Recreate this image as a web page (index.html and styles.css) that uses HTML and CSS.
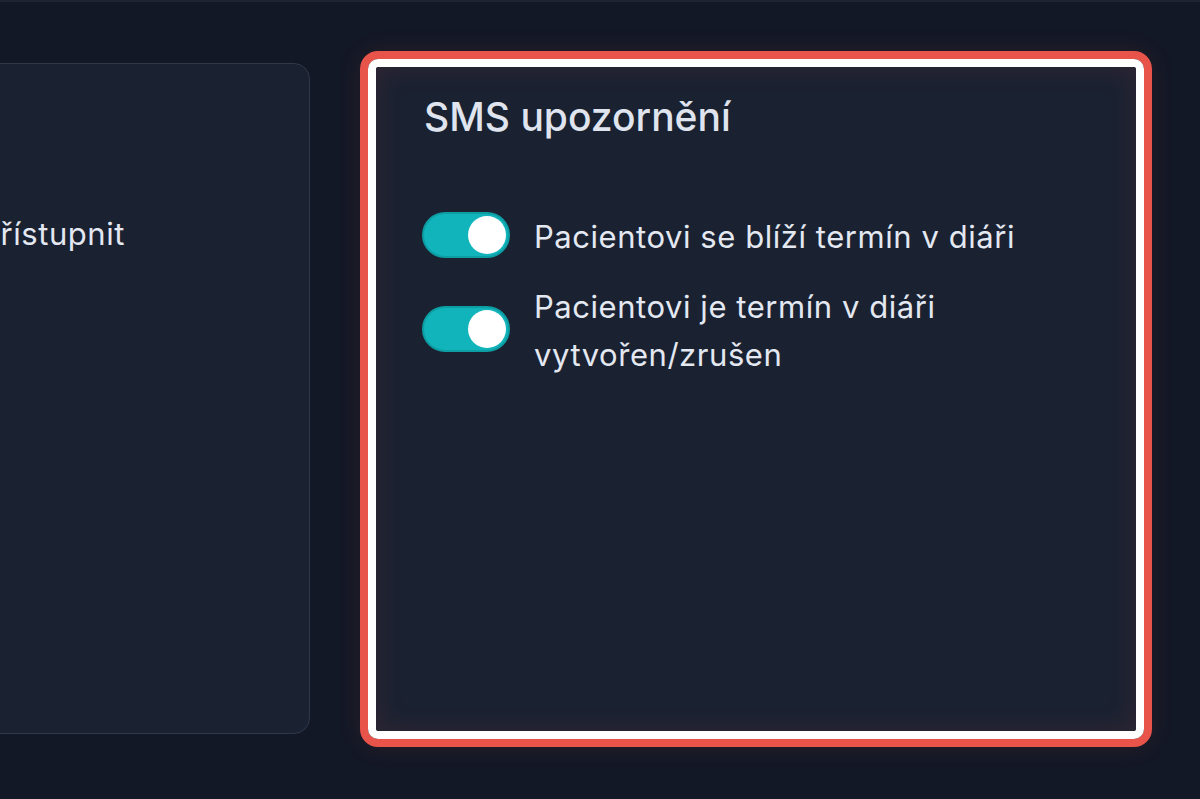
FILE: index.html
```html
<!DOCTYPE html>
<html lang="cs">
<head>
<meta charset="utf-8">
<title>SMS upozornění</title>
<link rel="stylesheet" href="styles.css">
</head>
<body>
<div class="topline"></div>
<main class="row">
  <section class="card card-left">
    <h2 class="card-title">Přístup pacienta</h2>
    <ul class="opts">
      <li class="opt">
        <span class="toggle on"><span class="knob"></span></span>
        <span class="opt-label">Zpřístupnit</span>
      </li>
    </ul>
  </section>
  <div class="highlight">
    <div class="ring">
      <section class="card card-right">
        <h2 class="card-title">SMS upozornění</h2>
        <ul class="opts">
          <li class="opt">
            <span class="toggle on"><span class="knob"></span></span>
            <span class="opt-label">Pacientovi se blíží termín v diáři</span>
          </li>
          <li class="opt">
            <span class="toggle on"><span class="knob"></span></span>
            <span class="opt-label">Pacientovi je termín v diáři<br>vytvořen/zrušen</span>
          </li>
        </ul>
      </section>
    </div>
  </div>
</main>
</body>
</html>
```

FILE: styles.css
```css
html, body {
  margin: 0;
  padding: 0;
}
body {
  background: #131826;
  font-family: Inter, "Noto Sans", "Liberation Sans", sans-serif;
  color: #e3e8f1;
  height: 799px;
  overflow: hidden;
}
.topline {
  height: 2px;
  background: #1d2432;
}
.row {
  display: flex;
  align-items: center;
  gap: 50px;
  margin-left: -198px;
  height: 797px;
  margin-top: -2px;
}
.card {
  background: #1a2131;
  box-sizing: border-box;
}
.card-left {
  width: 508px;
  height: 671px;
  border: 1px solid #2e3848;
  border-radius: 16px;
  padding: 26px 46px;
  flex: none;
}
.card-left .card-title {
  visibility: hidden;
}
.highlight {
  flex: none;
  border: 8px solid #e8534a;
  border-radius: 18px;
  box-shadow: 0 0 24px rgba(232, 83, 74, 0.1);
}
.ring {
  border: 8px solid #ffffff;
  border-radius: 10px;
}
.card-right {
  width: 760px;
  height: 664px;
  border-radius: 4px;
  padding: 26px 46px;
  box-shadow: inset 0 0 28px rgba(232, 83, 74, 0.12);
}
.card-title {
  margin: 0 0 0 2px;
  font-size: 39px;
  line-height: 48px;
  font-weight: 500;
  color: #dfe4ee;
}
.opts {
  list-style: none;
  margin: 69px 0 0;
  padding: 0;
  display: flex;
  flex-direction: column;
  gap: 19px;
}
.opt {
  display: flex;
  align-items: center;
  gap: 24px;
}
.opt-label {
  font-size: 31px;
  line-height: 48px;
  letter-spacing: 0.55px;
  color: #e3e8f1;
  padding-top: 3px;
}
.toggle {
  flex: none;
  box-sizing: border-box;
  width: 88px;
  height: 46px;
  border-radius: 23px;
  background: #10b4ba;
  border: 2px solid #0d9ea4;
  display: flex;
  align-items: center;
  justify-content: flex-end;
  padding: 0 2px;
}
.knob {
  width: 38px;
  height: 38px;
  border-radius: 50%;
  background: #ffffff;
}
```
